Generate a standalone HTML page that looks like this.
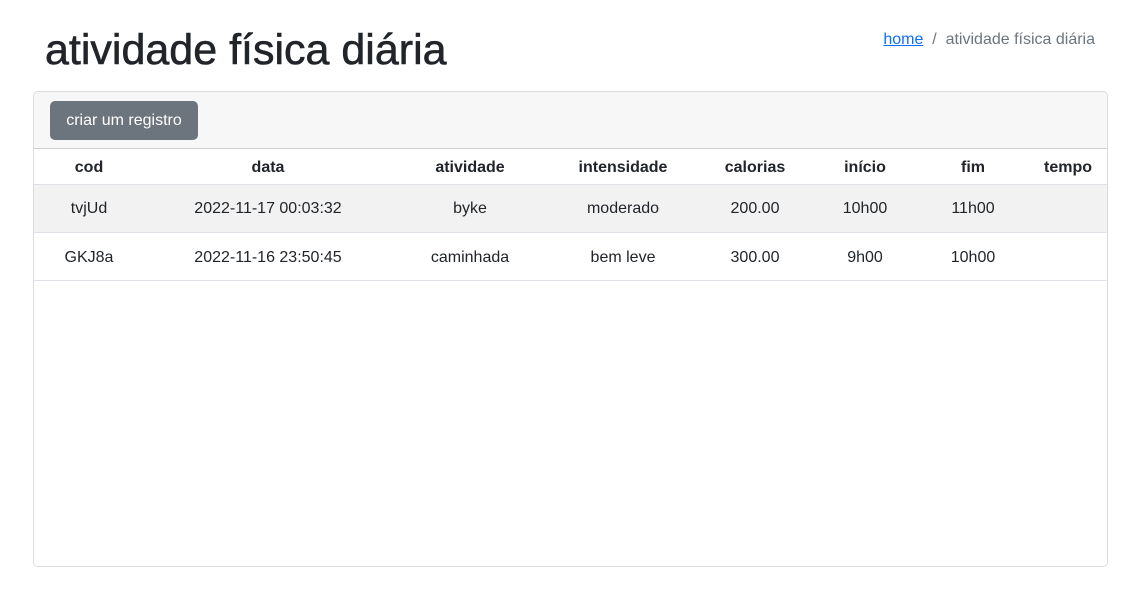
<!DOCTYPE html>
<html><head><meta charset="utf-8"><style>
*{margin:0;padding:0;box-sizing:border-box}
body{width:1138px;height:613px;background:#fff;font-family:"Liberation Sans",sans-serif;color:#212529;position:relative;overflow:hidden}
h1{position:absolute;left:45px;top:26px;font-size:43px;font-weight:normal;letter-spacing:0;-webkit-text-stroke:0.6px #212529}
.bc{position:absolute;right:43px;top:31px;font-size:16px;color:#6c757d}
.bc a{color:#0d6efd;text-decoration:underline}
.card{position:absolute;left:33px;top:91px;width:1075px;height:476px;border:1px solid #dcdcdc;border-radius:5px;overflow:hidden}
.ch{height:57px;background:#f7f7f7;border-bottom:1px solid #d0d0d0}
.btn{position:absolute;left:16px;top:9px;width:148px;height:39px;background:#6c757d;color:#fff;border-radius:5px;font-size:16px;line-height:39px;text-align:center}
.row{position:absolute;left:0;width:1073px;border-bottom:1px solid #dee2e6}
.row span{position:absolute;transform:translateX(-50%);white-space:nowrap;font-size:16px}
.h span{font-weight:bold}
</style></head><body>
<h1>atividade física diária</h1>
<div class="bc"><a>home</a>&nbsp; / &nbsp;atividade física diária</div>
<div class="card">
<div class="ch"><div class="btn">criar um registro</div></div>
<div class="row h" style="top:57px;height:36px"><span style="left:55px;top:10px">cod</span><span style="left:234px;top:10px">data</span><span style="left:436px;top:10px">atividade</span><span style="left:589px;top:10px">intensidade</span><span style="left:721px;top:10px">calorias</span><span style="left:831px;top:10px">início</span><span style="left:939px;top:10px">fim</span><span style="left:1034px;top:10px">tempo</span></div>
<div class="row" style="top:93px;height:48px;background:#f2f2f2"><span style="left:55px;top:15px">tvjUd</span><span style="left:234px;top:15px">2022-11-17 00:03:32</span><span style="left:436px;top:15px">byke</span><span style="left:589px;top:15px">moderado</span><span style="left:721px;top:15px">200.00</span><span style="left:831px;top:15px">10h00</span><span style="left:939px;top:15px">11h00</span></div>
<div class="row" style="top:141px;height:48px"><span style="left:55px;top:16px">GKJ8a</span><span style="left:234px;top:16px">2022-11-16 23:50:45</span><span style="left:436px;top:16px">caminhada</span><span style="left:589px;top:16px">bem leve</span><span style="left:721px;top:16px">300.00</span><span style="left:831px;top:16px">9h00</span><span style="left:939px;top:16px">10h00</span></div>
</div>
</body></html>
